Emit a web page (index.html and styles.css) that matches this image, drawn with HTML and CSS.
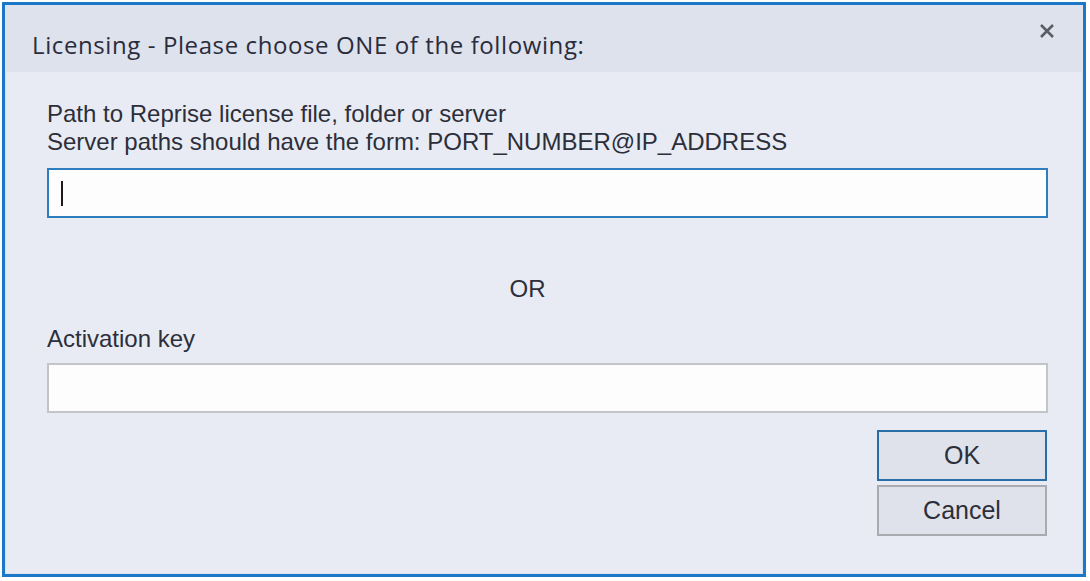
FILE: index.html
```html
<!DOCTYPE html>
<html lang="en">
<head>
    <meta charset="UTF-8">
    <title>Licensing</title>
    <link rel="stylesheet" href="styles.css">
</head>
<body>
    <div class="window">
        <header class="titlebar">
            <span class="title">Licensing - Please choose ONE of the following:</span>
            <span class="close">
                <svg width="16" height="16" viewBox="0 0 16 16"><path d="M2 2 L14 14 M14 2 L2 14" stroke="#5a5d63" stroke-width="2.6"/></svg>
            </span>
        </header>

        <main class="content">
            <p class="label">Path to Reprise license file, folder or server<br>Server paths should have the form: PORT_NUMBER@IP_ADDRESS</p>
            <div class="field focused"><span class="caret"></span></div>

            <p class="or">OR</p>

            <p class="label key">Activation key</p>
            <div class="field"></div>

            <div class="buttons">
                <button class="btn default">OK</button>
                <button class="btn">Cancel</button>
            </div>
        </main>
    </div>
</body>
</html>
```

FILE: styles.css
```css
html, body {
    margin: 0;
    padding: 0;
    background: #ffffff;
}

.window {
    width: 1084px;
    height: 575px;
    margin: 2px 0 0 2px;
    border: 3px solid #1b78c8;
    box-sizing: border-box;
    background: #e8ebf3;
    display: flex;
    flex-direction: column;
    box-shadow: inset 0 0 0 1px #d9e2f0;
    font-family: "Liberation Sans", Arial, sans-serif;
    color: #2c2f3a;
}

.titlebar {
    height: 67px;
    background: #dee2ed;
    display: flex;
    align-items: center;
    justify-content: space-between;
    padding: 0 28px 0 27px;
    flex-shrink: 0;
}

.title {
    font-family: "Open Sans", "Noto Sans", sans-serif;
    font-size: 24px;
    color: #2a2c3c;
    letter-spacing: 0.6px;
    margin-top: 12px;
}

.close {
    display: flex;
    margin-top: -16px;
}

.content {
    padding: 28px 35px 0 42px;
    display: flex;
    flex-direction: column;
}

.label {
    margin: 0;
    font-size: 24px;
    line-height: 28px;
    color: #2c2f3a;
}

.field {
    height: 50px;
    box-sizing: border-box;
    background: #fdfdfe;
    border: 2px solid #c2c4c8;
    margin-top: 10px;
    display: flex;
    align-items: center;
    padding-left: 12px;

    &.focused {
        border-color: #2e7dbf;
        margin-top: 12px;
    }
}

.caret {
    width: 2px;
    height: 25px;
    background: #1a1a1a;
}

.or {
    margin: 59px 40px 0 0;
    text-align: center;
    font-size: 24px;
    line-height: 24px;
}

.key {
    margin-top: 24px;
}

.buttons {
    display: flex;
    flex-direction: column;
    align-items: flex-end;
    gap: 4px;
    margin-top: 17px;
}

.btn {
    width: 170px;
    height: 51px;
    font-family: "Liberation Sans", Arial, sans-serif;
    font-size: 25px;
    color: #2c2f3a;
    background: #dfe2eb;
    border: 2px solid #a9abb0;
    padding: 0;
    margin-right: 1px;

    &.default {
        border-color: #2a6ea8;
    }
}
```
